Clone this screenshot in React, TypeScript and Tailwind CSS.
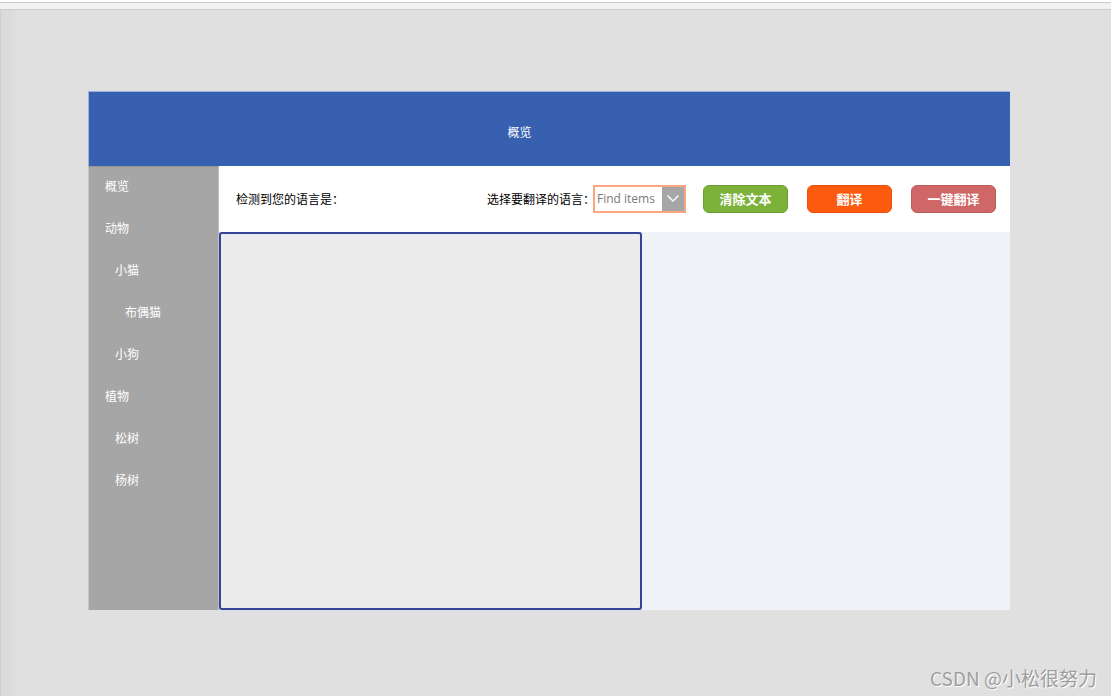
import React from "react";

const cjk = { fontFamily: '"Noto Sans CJK SC", "Noto Sans", sans-serif' };

const navItems: { label: string; indent: string }[] = [
  { label: "概览", indent: "pl-[16px]" },
  { label: "动物", indent: "pl-[16px]" },
  { label: "小猫", indent: "pl-[26px]" },
  { label: "布偶猫", indent: "pl-[36px]" },
  { label: "小狗", indent: "pl-[26px]" },
  { label: "植物", indent: "pl-[16px]" },
  { label: "松树", indent: "pl-[26px]" },
  { label: "杨树", indent: "pl-[26px]" },
];

export default function App() {
  return (
    <div
      className="relative w-[1111px] h-[696px] overflow-hidden bg-[#e0e0e0] flex flex-col"
      style={cjk}
    >
      {/* top strip */}
      <div className="h-[2px] bg-white" />
      <div className="h-[8px] bg-[#f2f2f2] border-y border-[#cbcbcb]" />

      <div className="flex-1 flex">
        <div className="w-[20px] border-l border-[#cfcfcf] bg-gradient-to-r from-[#d9d9d9] to-[#e0e0e0]" />
        <div className="pl-[68px] pt-[81px]">
          {/* app frame */}
          <div className="w-[922px] h-[519px] flex flex-col">
            <div className="h-[75px] bg-[#3760b1] border-t border-l border-[#9fb2dc] flex items-center justify-center pr-[60px] pt-[5px]">
              <span className="text-white text-[12px]">概览</span>
            </div>
            <div className="flex-1 flex">
              {/* sidebar */}
              <div className="w-[131px] bg-[#a6a6a6] border-t border-[#969696] border-l border-l-[#c4c4c4] border-r border-r-[#bdbdbd] flex flex-col">
                <div className="-mt-[2px]">
                  {navItems.map((it) => (
                    <div
                      key={it.label}
                      className={`h-[42px] flex items-center ${it.indent} text-white text-[12px]`}
                    >
                      {it.label}
                    </div>
                  ))}
                </div>
              </div>
              {/* main */}
              <div className="flex-1 flex flex-col">
                <div className="h-[66px] bg-white flex items-center pl-[17px] pr-[14px] pb-[1px]">
                  <span className="text-[12px] text-black">检测到您的语言是：</span>
                  <div className="flex-1" />
                  <span className="text-[12px] text-black -mr-[2px]">选择要翻译的语言：</span>
                  <div className="w-[93px] h-[28px] border-2 border-[#fba67f] bg-white flex">
                    <span
                      className="flex-1 flex items-center pl-[2px] text-[12px] text-[#7a7a7a]"
                      style={{ fontFamily: '"Open Sans", sans-serif' }}
                    >
                      Find items
                    </span>
                    <div className="w-[22px] bg-[#a6a6a6] flex items-center justify-center">
                      <svg width="14" height="9" viewBox="0 0 14 9">
                        <path d="M1.5 1.5 L7 7 L12.5 1.5" fill="none" stroke="white" strokeWidth="1.4" />
                      </svg>
                    </div>
                  </div>
                  <button className="ml-[17px] w-[85px] h-[28px] rounded-[6px] bg-[#7db23a] border border-[#6d9e33] text-white text-[13px] font-bold">
                    清除文本
                  </button>
                  <button className="ml-[19px] w-[85px] h-[28px] rounded-[6px] bg-[#fc5a0e] border border-[#e8530e] text-white text-[13px] font-bold">
                    翻译
                  </button>
                  <button className="ml-[19px] w-[85px] h-[28px] rounded-[6px] bg-[#cf6766] border border-[#bd5c5c] text-white text-[13px] font-bold">
                    一键翻译
                  </button>
                </div>
                <div className="flex-1 flex">
                  <div className="w-[423px] bg-[#ececec] border-2 border-[#34449a] rounded-[3px]" />
                  <div className="flex-1 bg-[#eff2f7]" />
                </div>
              </div>
            </div>
          </div>
        </div>
      </div>

      <div
        className="absolute right-[14px] bottom-[9px] text-[19px] text-[#9e9e9e] leading-none"
        style={{ ...cjk, textShadow: "1px 1px 0 #ffffff" }}
      >
        CSDN @小松很努力
      </div>
    </div>
  );
}
